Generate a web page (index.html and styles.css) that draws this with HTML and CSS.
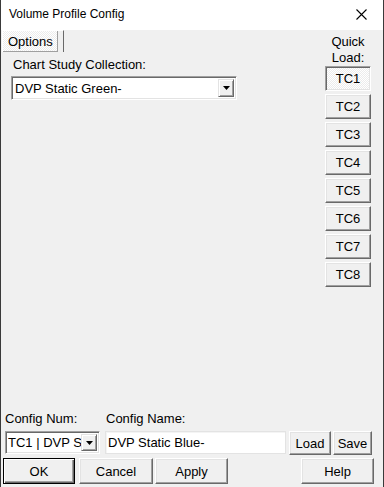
FILE: index.html
```html
<!DOCTYPE html>
<html>
<head>
<meta charset="utf-8">
<title>Volume Profile Config</title>
<link rel="stylesheet" href="styles.css">
</head>
<body>
<div class="window">
  <div class="titlebar">
    <span class="title">Volume Profile Config</span>
    <svg class="close" width="11" height="11" viewBox="0 0 11 11">
      <path d="M0.5 0.5 L10.5 10.5 M10.5 0.5 L0.5 10.5" stroke="#000" stroke-width="1.1" fill="none"/>
    </svg>
  </div>

  <div class="client">
    <div class="top">
      <div class="panel">
        <div class="tab"><span class="tab-label">Options</span></div>
        <div class="field-label study-label">Chart Study Collection:</div>
        <div class="combo study-combo">
          <span class="combo-text">DVP Static Green-</span>
          <span class="combo-btn">
            <svg width="7" height="4" viewBox="0 0 7 4"><path d="M0 0 H7 L3.5 4 Z" fill="#000"/></svg>
          </span>
        </div>
      </div>

      <div class="quick">
        <div class="quick-label">Quick<br>Load:</div>
        <div class="btn tc checked">TC1</div>
        <div class="btn tc">TC2</div>
        <div class="btn tc">TC3</div>
        <div class="btn tc">TC4</div>
        <div class="btn tc">TC5</div>
        <div class="btn tc">TC6</div>
        <div class="btn tc">TC7</div>
        <div class="btn tc">TC8</div>
      </div>
    </div>

    <div class="bottom">
      <div class="row config-row">
        <div class="group num-group">
          <div class="field-label">Config Num:</div>
          <div class="combo num-combo">
            <span class="combo-text">TC1 | DVP S</span>
            <span class="combo-btn">
              <svg width="7" height="4" viewBox="0 0 7 4"><path d="M0 0 H7 L3.5 4 Z" fill="#000"/></svg>
            </span>
          </div>
        </div>
        <div class="group name-group">
          <div class="field-label name-label">Config Name:</div>
          <div class="textbox">DVP Static Blue-</div>
        </div>
        <div class="btn small load">Load</div>
        <div class="btn small save">Save</div>
      </div>

      <div class="row action-row">
        <div class="btn action default ok">OK</div>
        <div class="btn action cancel">Cancel</div>
        <div class="btn action apply">Apply</div>
        <div class="btn action help">Help</div>
      </div>
    </div>
  </div>
</div>
</body>
</html>
```

FILE: styles.css
```css
html, body {
   margin: 0;
   padding: 0;
   background-color: #f0f0f0;
}

body {
   font-family: "Liberation Sans", Arial, sans-serif;
   font-size: 13px;
   color: #000;
}

.window {
   width: 384px;
   height: 487px;
   box-sizing: border-box;
   border-left: 1px solid #3a3a3a;
   border-right: 1px solid #3a3a3a;
   display: flex;
   flex-direction: column;
   overflow: hidden;
}

/* title bar */
.titlebar {
   height: 30px;
   flex: none;
   background-color: #fff;
   display: flex;
   align-items: center;
   justify-content: space-between;
   padding: 0 16px 0 8px;
}

.title {
   font-size: 12px;
   position: relative;
   top: -1px;
}

.close {
   display: block;
   position: relative;
   top: -1px;
}

/* client area */
.client {
   flex: 1;
   background-color: #f0f0f0;
   display: flex;
   flex-direction: column;
}

.top {
   display: flex;
   justify-content: space-between;
}

.panel {
   display: flex;
   flex-direction: column;
   align-items: flex-start;
}

.tab {
   margin-left: 1px;
   height: 22px;
   box-sizing: border-box;
   border-left: 1px solid #fff;
   border-top: 1px solid #fff;
   border-right: 1px solid #696969;
   padding-right: 5px;
   display: flex;
}

.tab-label {
   display: flex;
   align-items: center;
   padding: 0 4px 0 5px;
   width: 55px;
   box-sizing: border-box;
   border-right: 1px solid #a0a0a0;
   border-bottom: 1px solid #a0a0a0;
   background: repeating-conic-gradient(#fff 0 25%, #ececec 0 50%) 0 0 / 2px 2px;
}

.field-label {
   line-height: 15px;
   white-space: nowrap;
}

.study-label {
   margin: 5px 0 4px 12px;
}

/* combo boxes */
.combo {
   display: flex;
   align-items: center;
   box-sizing: border-box;
   background-color: #fff;
   border: 1px solid;
   border-color: #a0a0a0 #fff #fff #a0a0a0;
   box-shadow: inset 1px 1px #696969, inset -1px -1px #e3e3e3;
   padding: 2px;
   overflow: hidden;
}

.combo-text {
   flex: 1;
   white-space: nowrap;
   overflow: hidden;
   padding-left: 1px;
}

.combo-btn {
   flex: none;
   width: 16px;
   height: 100%;
   box-sizing: border-box;
   background-color: #f0f0f0;
   border: 1px solid;
   border-color: #e3e3e3 #696969 #696969 #e3e3e3;
   box-shadow: inset 1px 1px #fff, inset -1px -1px #a0a0a0;
   display: flex;
   align-items: center;
   justify-content: center;
}

.study-combo {
   margin-left: 10px;
   width: 226px;
   height: 24px;
}

/* quick load column */
.quick {
   width: 46px;
   margin-right: 12px;
   padding-top: 4px;
   display: flex;
   flex-direction: column;
   gap: 3px;
}

.quick-label {
   text-align: center;
   line-height: 16px;
   margin-bottom: -3px;
}

/* buttons */
.btn {
   box-sizing: border-box;
   display: flex;
   align-items: center;
   justify-content: center;
   background-color: #f0f0f0;
   border: 1px solid;
   border-color: #fff #696969 #696969 #fff;
   box-shadow: inset -1px -1px #a0a0a0, inset 1px 1px #e3e3e3;
   white-space: nowrap;
}

.tc {
   height: 25px;
}

.btn.checked {
   border-color: #a0a0a0 #fff #fff #a0a0a0;
   box-shadow: inset 1px 1px #696969, inset -1px -1px #e3e3e3;
   background: repeating-conic-gradient(#fff 0 25%, #ececec 0 50%) 0 0 / 2px 2px;
}

/* bottom area */
.bottom {
   margin-top: auto;
   padding-bottom: 3px;
}

.row {
   display: flex;
}

.config-row {
   align-items: flex-end;
   margin-bottom: 3px;
}

.group {
   display: flex;
   flex-direction: column;
   gap: 5px;
}

.num-group {
   margin-left: 4px;
   width: 95px;
}

.num-combo {
   height: 23px;
   margin-bottom: 1px;
}

.num-combo .combo-text {
   padding-left: 0;
}

.name-group {
   margin-left: 5px;
   width: 181px;
}

.name-label {
   padding-left: 1px;
}

.textbox {
   height: 23px;
   margin-bottom: 1px;
   box-sizing: border-box;
   background-color: #fff;
   border: 1px solid #e3e3e3;
   box-shadow: inset 1px 1px #f4f4f4;
   padding: 3px 2px 0;
   white-space: nowrap;
   overflow: hidden;
}

.small {
   height: 24px;
}

.load {
   margin-left: 3px;
   width: 42px;
}

.save {
   margin-left: 2px;
   width: 39px;
}

.action {
   height: 26px;
}

.ok {
   margin-left: 2px;
   width: 72px;
}

.btn.default {
   border: 1px solid #000;
   box-shadow: inset 1px 1px #fff, inset -1px -1px #696969, inset -2px -2px #a0a0a0;
}

.cancel {
   margin-left: 4px;
   width: 74px;
}

.apply {
   margin-left: 2px;
   width: 73px;
}

.help {
   margin-left: auto;
   margin-right: 9px;
   width: 73px;
}
```
